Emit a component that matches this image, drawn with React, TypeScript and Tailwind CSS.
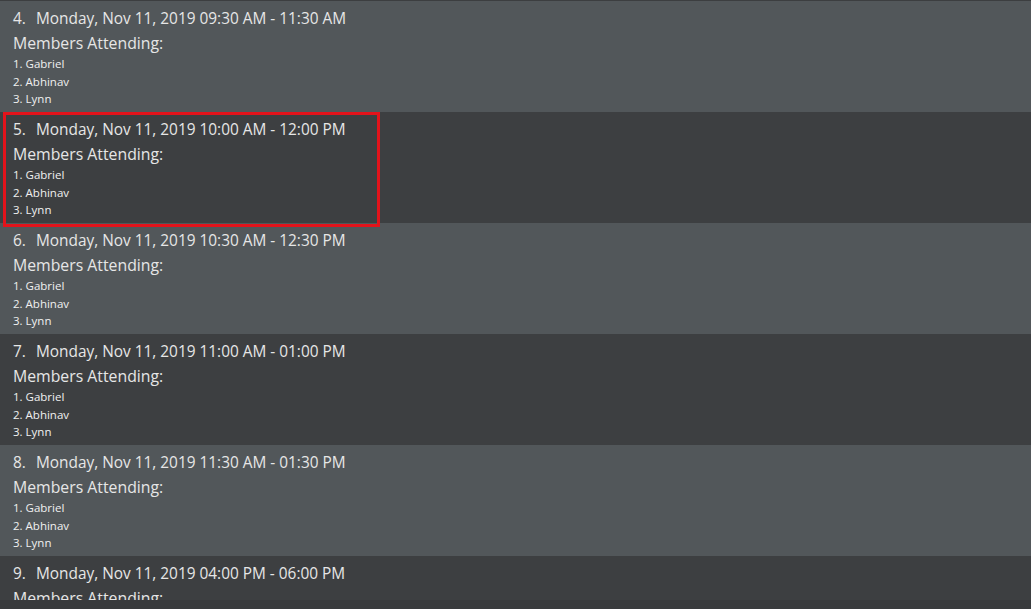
import React from "react";

const events = [
  { n: 4, t: "Monday, Nov 11, 2019 09:30 AM - 11:30 AM" },
  { n: 5, t: "Monday, Nov 11, 2019 10:00 AM - 12:00 PM" },
  { n: 6, t: "Monday, Nov 11, 2019 10:30 AM - 12:30 PM" },
  { n: 7, t: "Monday, Nov 11, 2019 11:00 AM - 01:00 PM" },
  { n: 8, t: "Monday, Nov 11, 2019 11:30 AM - 01:30 PM" },
  { n: 9, t: "Monday, Nov 11, 2019 04:00 PM - 06:00 PM" },
];

const members = ["Gabriel", "Abhinav", "Lynn"];

export default function App() {
  return (
    <div
      className="relative w-[1031px] h-[609px] overflow-hidden bg-[#383a3c] text-[#e6e6e6]"
      style={{ fontFamily: '"Open Sans", "Noto Sans", sans-serif' }}
    >
      <div className="h-[1px] bg-[#3c3e40]" />
      <div className="h-[599px] overflow-hidden">
        {events.map((e, i) => (
          <div
            key={e.n}
            className={`h-[111px] pl-[13px] pt-[7px] ${i % 2 === 0 ? "bg-[#52575a]" : "bg-[#3d3f41]"}`}
          >
            <div className="flex text-[15.4px] leading-[22px] whitespace-pre">
              <span className="w-[23px]">{`${e.n}.`}</span>
              <span>{e.t}</span>
            </div>
            <div className="text-[15.8px] leading-[22px] mt-[2px]">Members Attending:</div>
            <div className="mt-[1px]">
              {members.map((m, j) => (
                <div key={m} className="text-[11.5px] leading-[17.5px] text-[#f0f0f0]">{`${j + 1}. ${m}`}</div>
              ))}
            </div>
          </div>
        ))}
      </div>
      <div className="absolute left-[3px] top-[112px] w-[377px] h-[115px] border-[3px] border-[#e3131b]" />
    </div>
  );
}
